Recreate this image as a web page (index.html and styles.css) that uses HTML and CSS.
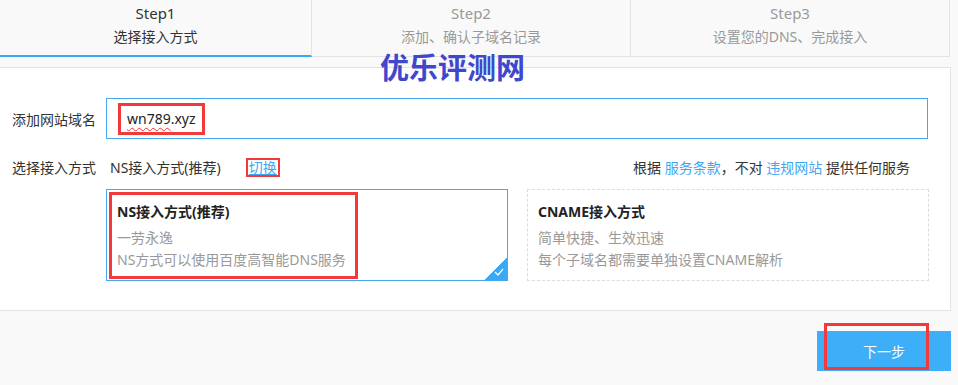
FILE: index.html
```html
<!DOCTYPE html>
<html lang="zh-CN">
<head>
  <meta charset="UTF-8">
  <title>添加网站</title>
  <link rel="stylesheet" href="styles.css">
</head>
<body>
  <div class="wrap">
    <ul class="steps">
      <li class="step active">
        <div class="step-num">Step1</div>
        <div class="step-name">选择接入方式</div>
      </li>
      <li class="step">
        <div class="step-num">Step2</div>
        <div class="step-name">添加、确认子域名记录</div>
      </li>
      <li class="step">
        <div class="step-num">Step3</div>
        <div class="step-name">设置您的DNS、完成接入</div>
      </li>
    </ul>

    <div class="watermark">优乐评测网</div>

    <div class="panel">
      <div class="row">
        <div class="label">添加网站域名</div>
        <div class="domain-input">
          <span class="mark domain-text"><span class="typo">wn789</span>.xyz</span>
        </div>
      </div>

      <div class="row row-mode">
        <div class="label">选择接入方式</div>
        <div class="mode-line">
          <span class="mode-current">NS接入方式(推荐)</span>
          <a class="switch mark" href="#">切换</a>
          <span class="terms">根据 <a href="#">服务条款</a>，不对 <a href="#">违规网站</a> 提供任何服务</span>
        </div>
      </div>

      <div class="modes">
        <div class="mode-card selected">
          <div class="mark mark-card"></div>
          <div class="mode-title">NS接入方式(推荐)</div>
          <div class="mode-desc">一劳永逸</div>
          <div class="mode-desc">NS方式可以使用百度高智能DNS服务</div>
          <div class="corner">
            <svg width="10" height="8" viewBox="0 0 10 8"><path d="M1 4 L4 7 L9 1" fill="none" stroke="#fff" stroke-width="1.3"/></svg>
          </div>
        </div>
        <div class="mode-card dashed">
          <div class="mode-title">CNAME接入方式</div>
          <div class="mode-desc">简单快捷、生效迅速</div>
          <div class="mode-desc">每个子域名都需要单独设置CNAME解析</div>
        </div>
      </div>
    </div>

    <div class="footer">
      <button class="next-btn" type="button">下一步<span class="mark mark-btn"></span></button>
    </div>
  </div>
</body>
</html>
```

FILE: styles.css
```css
body {
  margin: 0;
  background: #f9f9f9;
  font-family: "Noto Sans", "Noto Sans CJK SC", sans-serif;
  font-size: 14px;
  color: #333;
}
a {
  color: #3fa7f2;
  text-decoration: none;
}
.wrap {
  position: relative;
  width: 951px;
}
.steps {
  list-style: none;
  margin: 0;
  padding: 0;
  display: flex;
  width: 950px;
}
.step {
  box-sizing: border-box;
  height: 57px;
  flex: 1;
  text-align: center;
  border-right: 1px solid #e3e3e3;
  border-bottom: 1px solid #e3e3e3;
  color: #999;
  padding-top: 2px;
}
.step:first-child {
  flex: 0 0 312px;
}
.step.active {
  color: #333;
  border-bottom: 2px solid #3aa8f2;
}
.step-num {
  font-size: 15px;
  line-height: 22px;
}
.step-name {
  font-size: 14px;
  line-height: 24px;
  margin-top: 1px;
}
.watermark {
  position: absolute;
  left: 380px;
  top: 53px;
  font-size: 29px;
  line-height: 30px;
  font-weight: bold;
  color: #3f48cc;
  z-index: 2;
}
.panel {
  margin-top: 10px;
  background: #fff;
  border: 1px solid #e3e3e3;
  border-left: none;
  padding: 30px 0 29px 12px;
}
.mark {
  border: 3px solid #f23a3a;
}
.row {
  display: flex;
  align-items: center;
}
.label {
  width: 94px;
  color: #333;
}
.domain-input {
  box-sizing: border-box;
  width: 822px;
  height: 41px;
  border: 1px solid #45a9f0;
  display: flex;
  align-items: center;
  padding-left: 11px;
}
.domain-text {
  display: inline-block;
  padding: 0 6px;
  height: 26px;
  line-height: 26px;
  color: #222;
}
.typo {
  text-decoration: underline wavy #f03030;
  text-decoration-thickness: 1px;
  text-underline-offset: 3px;
}
.row-mode {
  margin-top: 18px;
  height: 20px;
}
.mode-line {
  display: flex;
  align-items: center;
  width: 800px;
  padding-left: 4px;
}
.switch {
  margin-left: 25px;
  border-width: 2px;
  line-height: 15px;
  padding: 0 1px;
  text-decoration: underline;
}
.terms {
  margin-left: auto;
}
.modes {
  display: flex;
  gap: 19px;
  margin-top: 12px;
  margin-left: 94px;
  width: 823px;
}
.mode-card {
  position: relative;
  flex: 1;
  box-sizing: border-box;
  height: 92px;
  padding: 12px 10px 0 10px;
}
.mode-card.selected {
  border: 1px solid #45a9f0;
}
.mode-card.dashed {
  border: 1px dashed #dcdcdc;
}
.mode-title {
  font-weight: bold;
  line-height: 20px;
  color: #222;
  margin-bottom: 5px;
}
.mode-desc {
  line-height: 22px;
  color: #999;
}
.mark-card {
  position: absolute;
  left: 2px;
  top: 2px;
  width: 243px;
  height: 81px;
}
.corner {
  position: absolute;
  right: 0;
  bottom: 0;
  width: 22px;
  height: 22px;
  background: linear-gradient(135deg, transparent 50%, #3aa8f2 50%);
}
.corner svg {
  position: absolute;
  right: 3px;
  bottom: 4px;
}
.footer {
  display: flex;
  justify-content: flex-end;
  padding-top: 20px;
}
.next-btn {
  position: relative;
  width: 134px;
  height: 40px;
  border: none;
  background: #3daef8;
  color: #fff;
  font-family: "Noto Sans", "Noto Sans CJK SC", sans-serif;
  font-size: 14px;
  cursor: pointer;
}
.mark-btn {
  position: absolute;
  left: 7px;
  top: -8px;
  width: 99px;
  height: 41px;
}
```
